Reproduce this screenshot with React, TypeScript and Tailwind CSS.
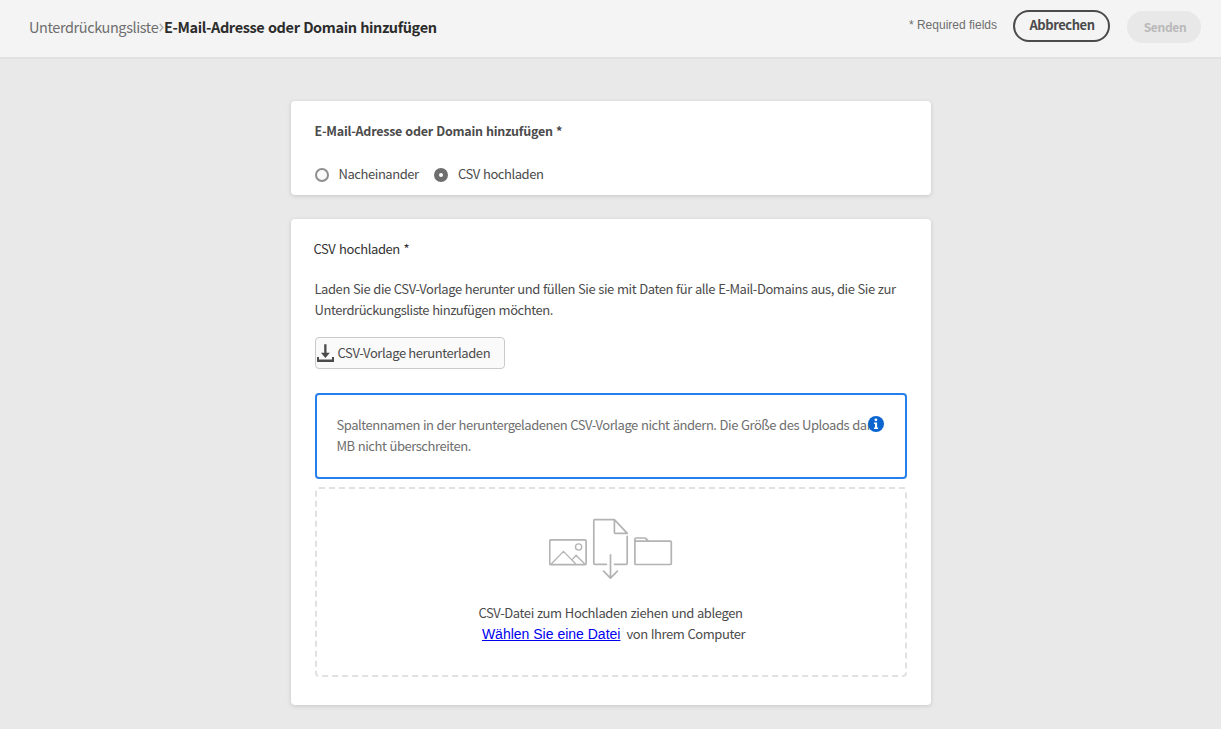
import React from "react";

function DownloadIcon() {
  return (
    <svg className="h-[18px] w-[17px] shrink-0" viewBox="0 0 17 18" fill="#4b4b4b">
      <path d="M7.2 0.3h2.3v8.4h3.4L8.4 14 3.9 8.7h3.3z" />
      <path d="M0 13h2v2.6h13V13h2v5H0z" />
    </svg>
  );
}

function InfoIcon() {
  return (
    <svg className="absolute left-[551px] top-[21px] h-4 w-4" viewBox="0 0 16 16">
      <circle cx="8" cy="8" r="8" fill="#0d66d0" />
      <circle cx="7.9" cy="3.8" r="1.4" fill="#fff" />
      <path d="M6 6.4h3.1v5h1V13H6v-1.6h1V8H6z" fill="#fff" />
    </svg>
  );
}

function UploadArt() {
  return (
    <svg
      className="h-[62px] w-[124px]"
      viewBox="549 518 124 62"
      fill="none"
      stroke="#b3b3b3"
      strokeWidth="1.7"
      strokeLinecap="round"
      strokeLinejoin="round"
    >
      <rect x="549.7" y="539.9" width="36.4" height="24.8" rx="1.2" />
      <circle cx="578.6" cy="547" r="3.1" strokeWidth="1.3" />
      <path d="M551.5 563.8l12-12.4 12 12.4M572.3 559.4l3.8-4.2 8.4 8.6" strokeWidth="1.3" />
      <path d="M606.5 564.3H594.8q-1 0-1-1V520.7q0-1 1-1H614.4l12.9 13.6H615.4q-1 0-1-1V519.7M627.2 536.4V563.3q0 1-1 1H614.5" />
      <path d="M610.5 554.8v23.2M603.6 571.2l6.9 7 6.9-7" />
      <path d="M634.9 541.2V563.5q0 1 1 1h34.4q1 0 1-1V542.2q0-1-1-1zM634.9 541.2v-2q0-1.2 1.2-1.2h8.2q1 0 1.7.7l2.4 2.4" />
    </svg>
  );
}

function Radio({ label, checked, gap }: { label: string; checked?: boolean; gap: string }) {
  return (
    <label className={"flex items-center " + gap}>
      <span
        className={
          checked
            ? "mt-0.5 h-3.5 w-3.5 rounded-full border-[5px] border-[#6e6e6e] bg-white"
            : "mt-0.5 h-3.5 w-3.5 rounded-full border-2 border-[#8e8e8e] bg-[#fafafa]"
        }
      />
      <span>{label}</span>
    </label>
  );
}

export default function App() {
  return (
    <div className="flex h-[729px] w-[1221px] flex-col overflow-hidden whitespace-nowrap bg-[#e9e9e9] font-['Noto_Sans_CJK_SC','Noto_Sans',sans-serif] text-[13px] leading-[21px] tracking-[-0.44px] text-[#4b4b4b] [word-spacing:0.62px]">
      <header className="flex h-[59px] shrink-0 items-start border-b-2 border-[#e1e1e1] bg-[#f4f4f4] pl-[29px] pr-5">
        <nav className="flex items-center pt-4 text-[14.5px]">
          <span className="w-[130px] tracking-[-0.41px] text-[#6e6e6e]">Unterdrückungsliste</span>
          <svg className="mt-px h-[9px] w-[5px]" viewBox="0 0 5 9" fill="none" stroke="#b0b0b0" strokeWidth="1.4">
            <path d="M.7.8l3.2 3.7L.7 8.2" />
          </svg>
          <h1 className="font-bold tracking-[-0.37px] text-[#2c2c2c]">E-Mail-Adresse oder Domain hinzufügen</h1>
        </nav>
        <span className="ml-auto pt-[15px] font-['Liberation_Sans',sans-serif] text-[12px] tracking-normal text-[#6e6e6e] [word-spacing:0]">
          * Required fields
        </span>
        <button className="ml-4 mt-2.5 h-8 w-[97px] rounded-full border-2 border-[#4b4b4b] pb-[3px] pl-px font-bold tracking-[-0.46px]">
          Abbrechen
        </button>
        <button className="ml-[17px] mt-[11px] h-8 w-[74px] rounded-full bg-[#e8e8e8] pb-0.5 pl-0.5 text-[12px] font-bold tracking-[-0.3px] text-[#b9b9b9]">
          Senden
        </button>
      </header>
      <main className="flex flex-col items-center gap-6 pt-[42px]">
        <section className="h-[94px] w-[640px] rounded bg-white px-6 pt-[19px] shadow-[0_1px_4px_rgba(0,0,0,0.15)]">
          <h2 className="text-[12.5px] font-bold tracking-[-0.24px]">E-Mail-Adresse oder Domain hinzufügen *</h2>
          <div className="mt-[22px] flex">
            <Radio label="Nacheinander" gap="w-[119px] gap-2.5" />
            <Radio label="CSV hochladen" checked gap="gap-[10.5px]" />
          </div>
        </section>
        <section className="flex h-[486px] w-[640px] flex-col rounded bg-white px-6 pt-[19px] shadow-[0_1px_4px_rgba(0,0,0,0.15)]">
          <h2 className="-ml-px tracking-[-0.42px] text-[#323232] [word-spacing:1.2px]">CSV hochladen *</h2>
          <p className="mt-[19px]">
            Laden Sie die CSV-Vorlage herunter und füllen Sie sie mit Daten für alle E-Mail-Domains aus, die Sie zur
            <br />
            Unterdrückungsliste hinzufügen möchten.
          </p>
          <button className="mt-[17px] flex h-8 w-[190px] items-center gap-1 rounded border border-[#cacaca] bg-[#fafafa] pl-px">
            <DownloadIcon />
            <span className="pb-0.5 tracking-[-0.4px]">CSV-Vorlage herunterladen</span>
          </button>
          <div className="relative mt-6 h-[86px] shrink-0 rounded border-2 border-[#2680eb] pl-5 pt-[19px] text-[#6e6e6e]">
            <p className="tracking-[-0.46px]">
              Spaltennamen in der heruntergeladenen CSV-Vorlage nicht ändern. Die Größe des Uploads dar
              <br />
              MB nicht überschreiten.
            </p>
            <InfoIcon />
          </div>
          <div className="mt-2 flex h-[190px] shrink-0 flex-col items-center rounded border-2 border-dashed border-[#e1e1e1] pt-[29px]">
            <UploadArt />
            <p className="mt-[22px] tracking-[-0.4px]">CSV-Datei zum Hochladen ziehen und ablegen</p>
            <p className="flex gap-1.5 pl-1.5">
              <a
                className="pt-px font-['Liberation_Sans',sans-serif] text-[14px] tracking-normal text-[#0000ee] underline [word-spacing:0]"
                href="#"
              >
                Wählen Sie eine Datei
              </a>
              <span>von Ihrem Computer</span>
            </p>
          </div>
        </section>
      </main>
    </div>
  );
}
